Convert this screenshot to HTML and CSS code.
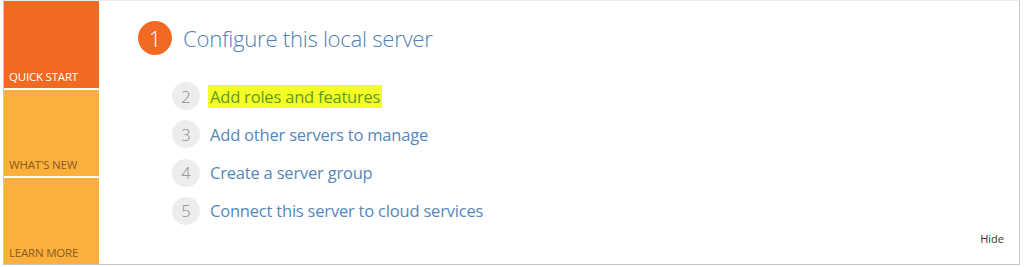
FILE: index.html
```html
<!DOCTYPE html>
<html>
<head>
<meta charset="utf-8">
<link rel="stylesheet" href="styles.css">
</head>
<body>
<div class="panel">
  <div class="sidebar">
    <div class="tile tile-quick"><span>QUICK START</span></div>
    <div class="tile tile-light"><span>WHAT'S NEW</span></div>
    <div class="tile tile-light"><span>LEARN MORE</span></div>
  </div>
  <div class="content">
    <div class="heading">
      <div class="num-big">1</div>
      <div class="title">Configure this local server</div>
    </div>
    <ul class="steps">
      <li class="step"><span class="num">2</span><span class="label hl">Add roles and features</span></li>
      <li class="step"><span class="num">3</span><span class="label">Add other servers to manage</span></li>
      <li class="step"><span class="num">4</span><span class="label">Create a server group</span></li>
      <li class="step"><span class="num">5</span><span class="label">Connect this server to cloud services</span></li>
    </ul>
    <div class="hide">Hide</div>
  </div>
</div>
</body>
</html>
```

FILE: styles.css
```css
html, body {
  margin: 0;
  padding: 0;
  background: #ffffff;
}
body {
  font-family: "Open Sans", "Noto Sans", sans-serif;
}
.panel {
  margin-left: 3px;
  width: 1015px;
  height: 263px;
  border: 1px solid #c6c6c6;
  border-top-color: #ececec;
  display: flex;
}
.sidebar {
  width: 95px;
  display: flex;
  flex-direction: column;
  gap: 2px;
  flex: none;
}
.tile {
  height: 86px;
  display: flex;
  align-items: flex-end;
  padding: 0 0 4px 5px;
  box-sizing: border-box;
  font-size: 11.5px;
  letter-spacing: -0.2px;
}
.tile-quick {
  height: 87px;
  background: #f26a21;
  color: #ffffff;
}
.tile-light {
  background: #fbb03b;
  color: #8a5a1e;
}
.content {
  flex: 1;
  position: relative;
  padding: 20px 0 0 39px;
}
.heading {
  display: flex;
  align-items: center;
  gap: 11px;
}
.num-big {
  width: 34px;
  height: 34px;
  border-radius: 50%;
  background: #f26a21;
  color: #ffffff;
  font-size: 22px;
  font-weight: 300;
  display: flex;
  align-items: center;
  justify-content: center;
}
.title {
  font-size: 22.2px;
  font-weight: 300;
  color: #4f81b4;
  letter-spacing: -0.3px;
}
.steps {
  list-style: none;
  margin: 27px 0 0 34px;
  padding: 0;
  display: flex;
  flex-direction: column;
  gap: 10.3px;
}
.step {
  display: flex;
  align-items: center;
  gap: 10px;
  height: 28px;
}
.num {
  width: 28px;
  height: 28px;
  border-radius: 50%;
  background: #ededed;
  color: #8c8c8c;
  font-size: 16.5px;
  font-weight: 300;
  display: flex;
  align-items: center;
  justify-content: center;
}
.label {
  font-size: 16.5px;
  color: #5587ba;
  letter-spacing: -0.2px;
}
.label.hl {
  background: #f4ff24;
  color: #5e9a2a;
  padding: 0 2px;
  margin-left: -2px;
}
.hide {
  position: absolute;
  right: 15px;
  bottom: 18px;
  font-size: 11px;
  color: #333333;
}
```
